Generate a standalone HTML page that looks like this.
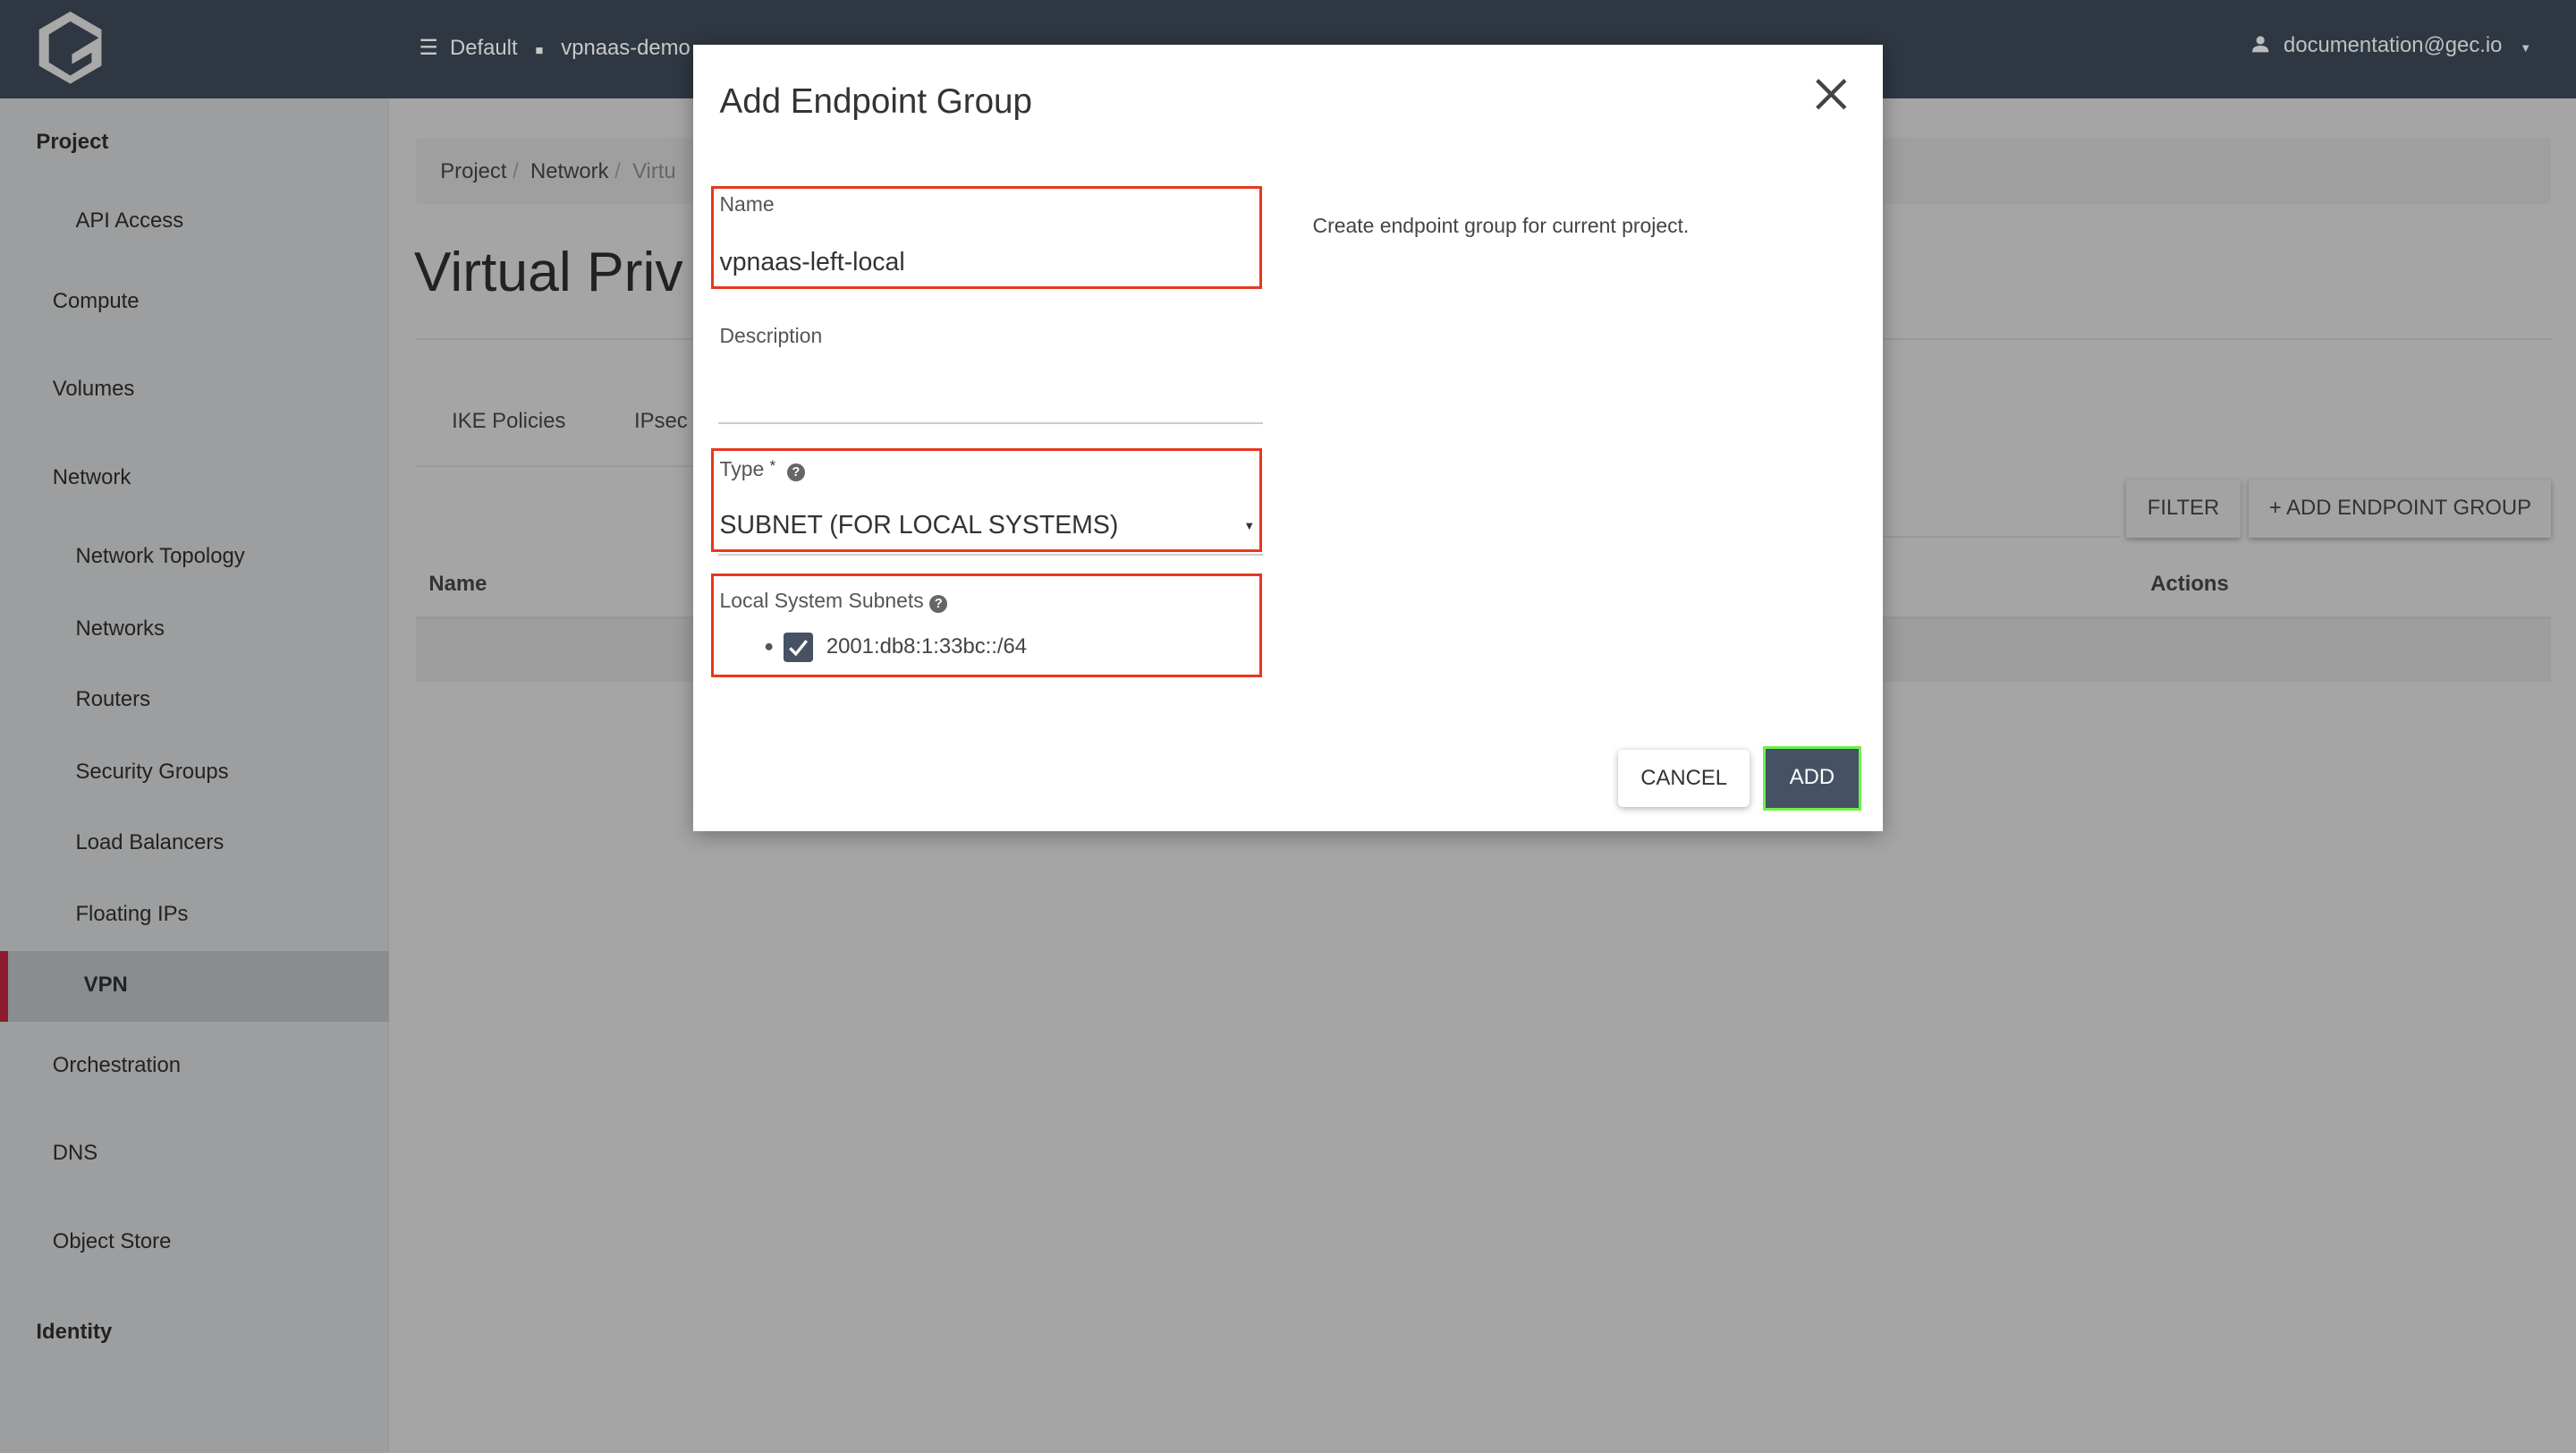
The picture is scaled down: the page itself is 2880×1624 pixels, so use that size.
<!DOCTYPE html>
<html><head><meta charset="utf-8"><style>
*{box-sizing:border-box;margin:0;padding:0}
html,body{width:2880px;height:1624px;overflow:hidden;background:#a5a5a5}
#w{width:1568px;height:884px;zoom:1.83673;position:relative;font-family:"Liberation Sans",sans-serif;color:#222;background:#a5a5a5}
.a{position:absolute;white-space:nowrap}
.hd{left:0;top:0;width:1568px;height:60px;background:#2e3742}
.sb{left:0;top:60px;width:237px;height:824px;background:#9d9e9f;border-right:1px solid #959697}
.si{font-size:13px;color:#222}
.red{border:2px solid #e8371f}
.lbl{font-size:12.5px;color:#555}
</style></head><body><div id="w">
<div class="a hd"></div>
<svg class="a" style="left:22px;top:6px" width="42" height="46" viewBox="0 0 42 46"><path d="M21 1 L40 12 L40 18 L21 7 L8 15 L8 32 L21 40 L34 32 L34 26 L22 33 L22 27 L40 16 L40 34 L21 45 L2 34 L2 12 Z" fill="#a9a9a9"/></svg>
<div class="a" style="left:255px;top:21px;font-size:13px;color:#c8c8c8">☰&nbsp; Default &nbsp;&nbsp;<span style="font-size:8px">■</span>&nbsp;&nbsp; vpnaas-demo</div>
<svg class="a" style="left:1371px;top:22px" width="10" height="10" viewBox="0 0 10 10"><circle cx="5" cy="2.7" r="2.5" fill="#bbb"/><path d="M0 10 Q0 6 5 6 Q10 6 10 10Z" fill="#bbb"/></svg>
<div class="a" style="left:1390px;top:20px;font-size:13px;color:#c0c0c0">documentation@gec.io &nbsp;&nbsp;<span style="font-size:7px">▼</span></div>
<div class="a sb"></div>
<div class="a si" style="left:22px;top:79px;font-weight:bold">Project</div>
<div class="a si" style="left:46px;top:127px">API Access</div>
<div class="a si" style="left:32px;top:176px">Compute</div>
<div class="a si" style="left:32px;top:229px">Volumes</div>
<div class="a si" style="left:32px;top:283px">Network</div>
<div class="a si" style="left:46px;top:331px">Network Topology</div>
<div class="a si" style="left:46px;top:375px">Networks</div>
<div class="a si" style="left:46px;top:418px">Routers</div>
<div class="a si" style="left:46px;top:462px">Security Groups</div>
<div class="a si" style="left:46px;top:505px">Load Balancers</div>
<div class="a si" style="left:46px;top:549px">Floating IPs</div>
<div class="a" style="left:0;top:579px;width:237px;height:43px;background:#8a8d90;border-left:5px solid #8c1b2e"></div>
<div class="a si" style="left:51px;top:592px;font-weight:bold">VPN</div>
<div class="a si" style="left:32px;top:641px">Orchestration</div>
<div class="a si" style="left:32px;top:694px">DNS</div>
<div class="a si" style="left:32px;top:748px">Object Store</div>
<div class="a si" style="left:22px;top:803px;font-weight:bold">Identity</div>
<div class="a" style="left:253px;top:84px;width:1300px;height:40px;background:#9f9f9f;border-radius:3px"></div>
<div class="a" style="left:268px;top:97px;font-size:13px;color:#333">Project <span style="color:#777">/</span>&nbsp; Network <span style="color:#777">/</span>&nbsp; <span style="color:#666">Virtu</span></div>
<div class="a" style="left:252px;top:146px;font-size:34px;color:#222">Virtual Priv</div>
<div class="a" style="left:253px;top:206px;width:1300px;height:1px;background:#999"></div>
<div class="a" style="left:275px;top:249px;font-size:13px;color:#333">IKE Policies</div>
<div class="a" style="left:386px;top:249px;font-size:13px;color:#333">IPsec</div>
<div class="a" style="left:253px;top:283px;width:200px;height:1px;background:#999"></div>
<div class="a" style="left:1146px;top:326px;width:145px;height:1px;background:#999"></div>
<div class="a" style="left:1294px;top:292px;width:70px;height:35px;background:#a3a3a3;box-shadow:0 1px 3px rgba(0,0,0,.3);font-size:13px;color:#333;text-align:center;line-height:35px">FILTER</div>
<div class="a" style="left:1369px;top:292px;width:184px;height:35px;background:#a3a3a3;box-shadow:0 1px 3px rgba(0,0,0,.3);font-size:13px;color:#333;text-align:center;line-height:35px">+ ADD ENDPOINT GROUP</div>
<div class="a" style="left:261px;top:348px;font-size:13px;font-weight:bold;color:#333">Name</div>
<div class="a" style="left:1309px;top:348px;font-size:13px;font-weight:bold;color:#333">Actions</div>
<div class="a" style="left:253px;top:375px;width:1300px;height:2px;background:#999"></div>
<div class="a" style="left:253px;top:377px;width:1300px;height:38px;background:#9d9d9d"></div>
<div class="a" style="left:422px;top:27px;width:724px;height:479px;background:#fff;box-shadow:0 3px 12px rgba(0,0,0,.3)"></div>
<div class="a" style="left:438px;top:50px;font-size:21px;color:#333">Add Endpoint Group</div>
<svg class="a" style="left:1104px;top:47px" width="21" height="21" viewBox="0 0 21 21"><path d="M2 2L19 19M19 2L2 19" stroke="#444" stroke-width="2.4"/></svg>
<div class="a red" style="left:433px;top:113px;width:335px;height:63px"></div>
<div class="a lbl" style="left:438px;top:117px">Name</div>
<div class="a" style="left:438px;top:151px;font-size:15.5px;color:#333">vpnaas-left-local</div>
<div class="a" style="left:799px;top:130px;font-size:12.5px;color:#444">Create endpoint group for current project.</div>
<div class="a lbl" style="left:438px;top:197px">Description</div>
<div class="a" style="left:437px;top:257px;width:332px;height:1px;background:#ccc"></div>
<div class="a red" style="left:433px;top:273px;width:335px;height:63px"></div>
<div class="a lbl" style="left:438px;top:278px">Type <span style="font-size:9px;color:#334;vertical-align:top">*</span>&nbsp; <span style="display:inline-block;width:11px;height:11px;border-radius:50%;background:#666;color:#fff;font-size:8px;text-align:center;line-height:11px;font-weight:bold">?</span></div>
<div class="a" style="left:438px;top:311px;font-size:15.5px;color:#333">SUBNET (FOR LOCAL SYSTEMS)</div>
<div class="a" style="left:757px;top:316px;font-size:7px;color:#333">▼</div>
<div class="a" style="left:437px;top:337px;width:332px;height:1px;background:#ccc"></div>
<div class="a red" style="left:433px;top:349px;width:335px;height:63px"></div>
<div class="a lbl" style="left:438px;top:358px">Local System Subnets <span style="display:inline-block;width:11px;height:11px;border-radius:50%;background:#666;color:#fff;font-size:8px;text-align:center;line-height:11px;font-weight:bold">?</span></div>
<div class="a" style="left:465px;top:387px;font-size:10px;color:#555">●</div>
<div class="a" style="left:477px;top:385px;width:18px;height:18px;background:#465264;border-radius:2px"></div>
<svg class="a" style="left:477px;top:385px" width="18" height="18" viewBox="0 0 18 18"><path d="M4 9.5L7.5 13L14 5" stroke="#fff" stroke-width="1.8" fill="none"/></svg>
<div class="a" style="left:503px;top:386px;font-size:13px;color:#444">2001:db8:1:33bc::/64</div>
<div class="a" style="left:985px;top:456px;width:80px;height:35px;background:#fff;border-radius:3px;box-shadow:0 1px 4px rgba(0,0,0,.3);font-size:13px;color:#333;text-align:center;line-height:35px">CANCEL</div>
<div class="a" style="left:1073px;top:454px;width:60px;height:39px;background:#465264;border:2px solid #6ef04a;font-size:13px;color:#fff;text-align:center;line-height:35px">ADD</div>
</div></body></html>
